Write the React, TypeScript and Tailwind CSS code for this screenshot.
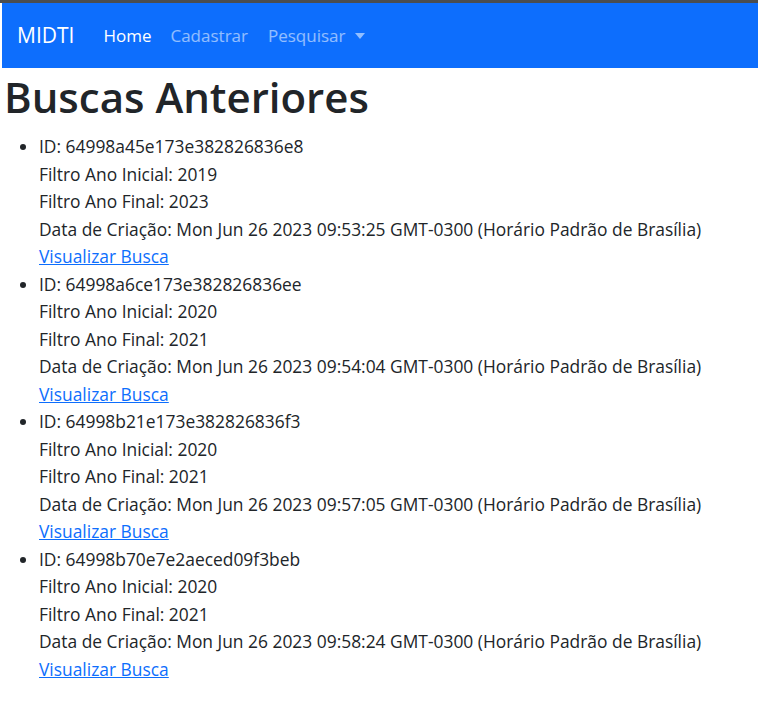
const buscas = [
  {
    id: '64998a45e173e382826836e8',
    inicial: '2019',
    final: '2023',
    data: 'Mon Jun 26 2023 09:53:25 GMT-0300 (Horário Padrão de Brasília)',
  },
  {
    id: '64998a6ce173e382826836ee',
    inicial: '2020',
    final: '2021',
    data: 'Mon Jun 26 2023 09:54:04 GMT-0300 (Horário Padrão de Brasília)',
  },
  {
    id: '64998b21e173e382826836f3',
    inicial: '2020',
    final: '2021',
    data: 'Mon Jun 26 2023 09:57:05 GMT-0300 (Horário Padrão de Brasília)',
  },
  {
    id: '64998b70e7e2aeced09f3beb',
    inicial: '2020',
    final: '2021',
    data: 'Mon Jun 26 2023 09:58:24 GMT-0300 (Horário Padrão de Brasília)',
  },
];

export default function App() {
  return (
    <div className="min-h-screen bg-white text-[#212529] font-['Open_Sans',sans-serif]">
      <div className="h-[3px] bg-[#4a4d50]" />
      <nav className="ml-[2px] flex h-[65px] items-center bg-[#0d6efd] pl-[15px]">
        <a href="#" className="mr-[29px] text-[21px] text-white">MIDTI</a>
        <ul className="flex items-center text-[17px]">
          <li className="mr-[19px]"><a href="#" className="text-white">Home</a></li>
          <li className="mr-[20px]"><a href="#" className="text-white/55">Cadastrar</a></li>
          <li>
            <a href="#" className="flex items-center text-white/55">
              Pesquisar
              <span className="ml-[10px] h-0 w-0 border-x-[5px] border-t-[6px] border-x-transparent border-t-white/55" />
            </a>
          </li>
        </ul>
      </nav>
      <h1 className="ml-[4px] mt-[4px] text-[42px] font-semibold leading-[1.2]">Buscas Anteriores</h1>
      <ul className="ml-[39px] mt-[11px] list-disc text-[17.4px] leading-[27.5px]">
        {buscas.map((b) => (
          <li key={b.id}>
            <p>ID: {b.id}</p>
            <p>Filtro Ano Inicial: {b.inicial}</p>
            <p>Filtro Ano Final: {b.final}</p>
            <p>Data de Criação: {b.data}</p>
            <a href="#" className="text-[#0d6efd] underline">Visualizar Busca</a>
          </li>
        ))}
      </ul>
    </div>
  );
}
